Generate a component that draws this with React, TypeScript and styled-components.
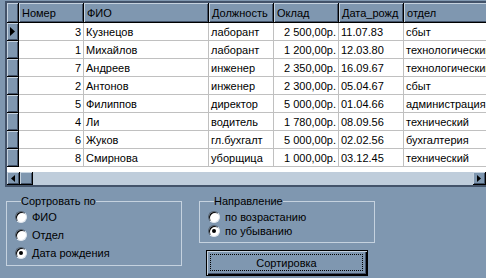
import React from 'react';
import styled, { createGlobalStyle } from 'styled-components';

const BG = '#7f97b0';
const LIGHT = '#c5d2df';
const SHADOW = '#43536a';
const GRIDLINE = '#c0c0c0';
const TRACK = '#bfcddb';

const GlobalStyle = createGlobalStyle`
  html, body { margin: 0; padding: 0; background: ${BG}; }
  body {
    width: 486px; height: 278px; overflow: hidden;
    font-family: "Liberation Sans", Arial, sans-serif;
    font-size: 11px; color: #000;
  }
  * { box-sizing: border-box; }
`;

const Form = styled.div`
  width: 486px;
  height: 278px;
  background: ${BG};
  display: flex;
  flex-direction: column;
  overflow: hidden;
`;

const GridFrame = styled.div`
  margin: 1px 0 0 5px;
  width: 481px;
  height: 186px;
  border-top: 2px solid ${SHADOW};
  border-left: 2px solid ${SHADOW};
  border-bottom: 2px solid ${SHADOW};
  background: #fff;
  display: flex;
  flex-direction: column;
  overflow: hidden;
`;

const Row = styled.div<{ $h: number }>`
  display: flex;
  flex: none;
  height: ${(p) => p.$h}px;
  white-space: nowrap;
`;

const Raised = styled.div<{ $w: number; $align?: string }>`
  flex: none;
  width: ${(p) => p.$w}px;
  background: ${BG};
  border-right: 1px solid #000;
  border-bottom: 1px solid #000;
  box-shadow: inset 1px 1px 0 ${LIGHT}, inset -1px -1px 0 ${SHADOW};
  display: flex;
  align-items: center;
  justify-content: ${(p) => p.$align || 'flex-start'};
  padding: 0 3px;
  overflow: hidden;
`;

const Cell = styled.div<{ $w: number; $right?: boolean }>`
  flex: none;
  width: ${(p) => p.$w}px;
  border-right: 1px solid ${GRIDLINE};
  border-bottom: 1px solid ${GRIDLINE};
  display: flex;
  align-items: center;
  justify-content: ${(p) => (p.$right ? 'flex-end' : 'flex-start')};
  padding: 0 2px;
  overflow: hidden;
`;

const Filler = styled.div`
  flex: 1;
`;

const ScrollBar = styled.div`
  flex: none;
  height: 13px;
  display: flex;
  background: ${TRACK};
`;

const ScrollBtn = styled.div<{ $w: number }>`
  flex: none;
  width: ${(p) => p.$w}px;
  height: 13px;
  background: ${BG};
  border-right: 1px solid #000;
  border-bottom: 1px solid #000;
  box-shadow: inset 1px 1px 0 ${LIGHT}, inset -1px -1px 0 ${SHADOW};
  display: flex;
  align-items: center;
  justify-content: center;
`;

const Track = styled.div`
  flex: 1;
`;

const Bottom = styled.div`
  display: flex;
  align-items: flex-start;
  gap: 17px;
  padding: 8px 0 0 6px;
`;

const Group = styled.fieldset<{ $w: number; $h: number }>`
  margin: 0;
  padding: 0 0 0 8px;
  width: ${(p) => p.$w}px;
  height: ${(p) => p.$h}px;
  min-width: 0;
  border: 1px solid ${LIGHT};
  display: flex;
  flex-direction: column;
`;

const Caption = styled.legend`
  padding: 0;
  margin-left: 6px;
  line-height: 13px;
  height: 13px;
  font-size: 11px;
`;

const RadioRow = styled.label<{ $h: number }>`
  display: flex;
  align-items: center;
  gap: 5px;
  height: ${(p) => p.$h}px;
  line-height: 13px;
`;

const RadioDot = styled.span<{ $on?: boolean }>`
  flex: none;
  width: 12px;
  height: 12px;
  border-radius: 50%;
  background: #fff;
  border: 1px solid;
  border-color: #4d5c6c #dfe6ee #dfe6ee #4d5c6c;
  box-shadow: inset 1px 1px 0 #000;
  display: flex;
  align-items: center;
  justify-content: center;
  &::after {
    content: '';
    display: ${(p) => (p.$on ? 'block' : 'none')};
    width: 4px;
    height: 4px;
    border-radius: 50%;
    background: #000;
  }
`;

const RightCol = styled.div`
  display: flex;
  flex-direction: column;
`;

const Radios = styled.div<{ $pt: number }>`
  display: flex;
  flex-direction: column;
  padding-top: ${(p) => p.$pt}px;
`;

const Button = styled.button`
  margin: 7px 0 0 7px;
  width: 162px;
  height: 26px;
  padding: 0;
  background: ${BG};
  border: 1px solid #000;
  box-shadow: inset 1px 1px 0 ${LIGHT}, inset -1px -1px 0 #000, inset -2px -2px 0 ${SHADOW};
  font-family: "Liberation Sans", Arial, sans-serif;
  font-size: 11px;
  color: #000;
  display: flex;
  align-items: stretch;
`;

const FocusRect = styled.span`
  flex: 1;
  margin: 3px 4px 4px 3px;
  border: 1px dotted #000;
  display: flex;
  align-items: center;
  justify-content: center;
`;

const Arrow = ({ dir }: { dir: 'left' | 'right' }) => (
  <svg width="4" height="7" viewBox="0 0 4 7">
    {dir === 'right' ? <path d="M0 0 L4 3.5 L0 7 Z" fill="#000" /> : <path d="M4 0 L0 3.5 L4 7 Z" fill="#000" />}
  </svg>
);

const Pointer = () => (
  <svg width="5" height="9" viewBox="0 0 5 9">
    <path d="M0 0 L5 4.5 L0 9 Z" fill="#000" />
  </svg>
);

const cols = [
  { key: 'n', title: 'Номер', w: 65, right: true },
  { key: 'f', title: 'ФИО', w: 125 },
  { key: 'd', title: 'Должность', w: 65 },
  { key: 'o', title: 'Оклад', w: 65, right: true },
  { key: 'b', title: 'Дата_рожд', w: 65 },
  { key: 'g', title: 'отдел', w: 110 },
];

const rows = [
  ['3', 'Кузнецов', 'лаборант', '2 500,00р.', '11.07.83', 'сбыт'],
  ['1', 'Михайлов', 'лаборант', '1 200,00р.', '12.03.80', 'технологический'],
  ['7', 'Андреев', 'инженер', '2 350,00р.', '16.09.67', 'технологический'],
  ['2', 'Антонов', 'инженер', '2 300,00р.', '05.04.67', 'сбыт'],
  ['5', 'Филиппов', 'директор', '5 000,00р.', '01.04.66', 'администрация'],
  ['4', 'Ли', 'водитель', '1 780,00р.', '08.09.56', 'технический'],
  ['6', 'Жуков', 'гл.бухгалт', '5 000,00р.', '02.02.56', 'бухгалтерия'],
  ['8', 'Смирнова', 'уборщица', '1 000,00р.', '03.12.45', 'технический'],
];

export default function App() {
  return (
    <Form>
      <GlobalStyle />
      <GridFrame>
        <Row $h={20}>
          <Raised $w={12} />
          {cols.map((c) => (
            <Raised key={c.key} $w={c.w}>{c.title}</Raised>
          ))}
        </Row>
        {rows.map((r, i) => (
          <Row key={i} $h={18}>
            <Raised $w={12} $align="center">{i === 0 ? <Pointer /> : null}</Raised>
            {cols.map((c, j) => (
              <Cell key={c.key} $w={c.w} $right={c.right}>{r[j]}</Cell>
            ))}
          </Row>
        ))}
        <Filler />
        <ScrollBar>
          <ScrollBtn $w={13}><Arrow dir="left" /></ScrollBtn>
          <ScrollBtn $w={13} />
          <Track />
          <ScrollBtn $w={13}><Arrow dir="right" /></ScrollBtn>
        </ScrollBar>
      </GridFrame>
      <Bottom>
        <Group $w={176} $h={71}>
          <Caption>Сортровать по</Caption>
          <Radios $pt={0}>
            <RadioRow $h={18}><RadioDot />ФИО</RadioRow>
            <RadioRow $h={18}><RadioDot />Отдел</RadioRow>
            <RadioRow $h={18}><RadioDot $on />Дата рождения</RadioRow>
          </Radios>
        </Group>
        <RightCol>
          <Group $w={176} $h={48}>
            <Caption>Направление</Caption>
            <Radios $pt={2}>
              <RadioRow $h={14}><RadioDot />по возрастанию</RadioRow>
              <RadioRow $h={14}><RadioDot $on />по убыванию</RadioRow>
            </Radios>
          </Group>
          <Button type="button"><FocusRect>Сортировка</FocusRect></Button>
        </RightCol>
      </Bottom>
    </Form>
  );
}
